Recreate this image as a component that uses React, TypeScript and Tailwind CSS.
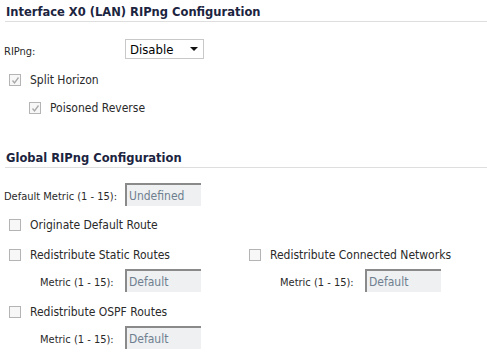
import React from 'react';

const font = "font-['DejaVu_Sans_Condensed','DejaVu_Sans',sans-serif]";

const Check: React.FC<{ checked?: boolean }> = ({ checked }) => (
  <span className="w-[12px] h-[12px] border border-[#b4b4b4] bg-[#f7f7f7] flex items-center justify-center shrink-0">
    {checked && (
      <svg width="9" height="9" viewBox="0 0 9 9">
        <path d="M1.5 4.5 L3.5 7 L7.5 1.5" fill="none" stroke="#a8a8a8" strokeWidth="1.3" />
      </svg>
    )}
  </span>
);

const CheckRow: React.FC<{ label: string; checked?: boolean; className?: string }> = ({ label, checked, className }) => (
  <div className={`flex items-center h-[12px] ${className ?? ''}`}>
    <Check checked={checked} />
    <span className="ml-[9px] text-[12px] text-[#2a2a2a] leading-none">{label}</span>
  </div>
);

const Field: React.FC<{ value: string }> = ({ value }) => (
  <div className="w-[76px] h-[23px] bg-[#eef0f2] border-t-2 border-l-2 border-t-[#8a8a8a] border-l-[#8a8a8a] flex items-center pl-[2px] text-[12px] text-[#6f7f8f]">
    {value}
  </div>
);

const MetricRow: React.FC<{ className?: string }> = ({ className }) => (
  <div className={`flex items-center h-[23px] ${className ?? ''}`}>
    <span className="w-[85px] pl-[40px] box-content text-[11px] text-[#2a2a2a] leading-none pt-[3px] whitespace-nowrap">Metric (1 - 15):</span>
    <Field value="Default" />
  </div>
);

const Heading: React.FC<{ title: string; className?: string }> = ({ title, className }) => (
  <div className={`ml-[5px] border-b border-[#dedede] h-[22px] flex items-end pb-[3px] ${className ?? ''}`}>
    <h2 className="ml-[1px] font-['DejaVu_Sans',sans-serif] text-[11.5px] font-bold text-[#1c2440] leading-none">{title}</h2>
  </div>
);

const App: React.FC = () => {
  return (
    <div className={`w-[487px] h-[358px] bg-white overflow-hidden ${font}`}>
      <Heading title="Interface X0 (LAN) RIPng Configuration" />

      <div className="flex items-end h-[20px] mt-[17px]">
        <span className="w-[121px] ml-[4px] text-[11px] text-[#2a2a2a] leading-none mb-[2px]">RIPng:</span>
        <div className="w-[79px] h-[20px] border border-[#c8c8c8] bg-white flex items-center justify-between pl-[4px] pr-[5px]">
          <span className="text-[13px] text-black leading-none">Disable</span>
          <svg width="8" height="4" viewBox="0 0 8 4">
            <path d="M0 0 H8 L4 4 Z" fill="#111" />
          </svg>
        </div>
      </div>

      <CheckRow label="Split Horizon" checked className="ml-[9px] mt-[15px]" />
      <CheckRow label="Poisoned Reverse" checked className="ml-[29px] mt-[16px]" />

      <Heading title="Global RIPng Configuration" className="mt-[32px]" />

      <div className="flex items-center h-[23px] mt-[15px]">
        <span className="w-[121px] ml-[4px] text-[11px] text-[#2a2a2a] leading-none pt-[4px] whitespace-nowrap">Default Metric (1 - 15):</span>
        <Field value="Undefined" />
      </div>

      <CheckRow label="Originate Default Route" className="ml-[9px] mt-[13px]" />

      <div className="grid grid-cols-[240px_240px] mt-[18px]">
        <div className="flex flex-col">
          <CheckRow label="Redistribute Static Routes" className="ml-[9px]" />
          <MetricRow className="mt-[8px]" />
          <CheckRow label="Redistribute OSPF Routes" className="ml-[9px] mt-[14px]" />
          <MetricRow className="mt-[8px]" />
        </div>
        <div className="flex flex-col">
          <CheckRow label="Redistribute Connected Networks" className="ml-[9px]" />
          <MetricRow className="mt-[8px]" />
        </div>
      </div>
    </div>
  );
};

export default App;
